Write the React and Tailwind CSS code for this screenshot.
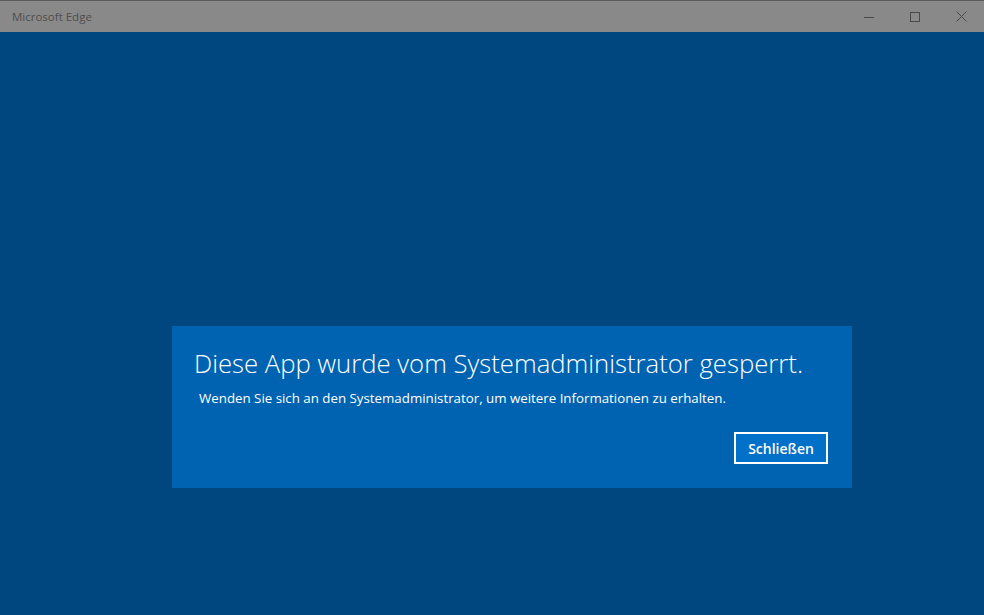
export default function App() {
  return (
    <div className="w-[984px] h-[615px] flex flex-col bg-[#00467f] overflow-hidden" style={{ fontFamily: '"Open Sans", "Noto Sans", sans-serif' }}>
      <div className="h-[32px] shrink-0 bg-[#898989] border-t border-[#5a5a5a] flex items-center justify-between">
        <span className="pl-[12px] text-[11.5px] text-[#4e4e4e]">Microsoft Edge</span>
        <div className="flex h-full">
          <div className="w-[46px] h-full flex items-center justify-center">
            <svg width="10" height="10" viewBox="0 0 10 10"><path d="M0 5.5h10" stroke="#4a4a4a" strokeWidth="1" /></svg>
          </div>
          <div className="w-[46px] h-full flex items-center justify-center">
            <svg width="10" height="10" viewBox="0 0 10 10"><rect x="0.5" y="0.5" width="9" height="9" fill="none" stroke="#4a4a4a" strokeWidth="1" /></svg>
          </div>
          <div className="w-[46px] h-full flex items-center justify-center">
            <svg width="11" height="11" viewBox="0 0 11 11"><path d="M0.5 0.5l10 10M10.5 0.5l-10 10" stroke="#4a4a4a" strokeWidth="1" /></svg>
          </div>
        </div>
      </div>
      <div className="flex-1 flex flex-col">
        <div className="h-[294px]" />
        <div className="ml-[172px] w-[680px] h-[162px] bg-[#0063b1] flex flex-col">
          <div className="pl-[22px] pt-[20px] text-[25.7px] leading-[36px] font-light text-white">Diese App wurde vom Systemadministrator gesperrt.</div>
          <div className="pl-[27px] pt-[6px] text-[13.3px] leading-[20px] text-white">Wenden Sie sich an den Systemadministrator, um weitere Informationen zu erhalten.</div>
          <div className="flex justify-end pr-[24px] pt-[24px]">
            <button className="w-[94px] h-[32px] border-2 border-white bg-[#0070c9] text-white text-[14px] font-semibold">Schließen</button>
          </div>
        </div>
      </div>
    </div>
  );
}
